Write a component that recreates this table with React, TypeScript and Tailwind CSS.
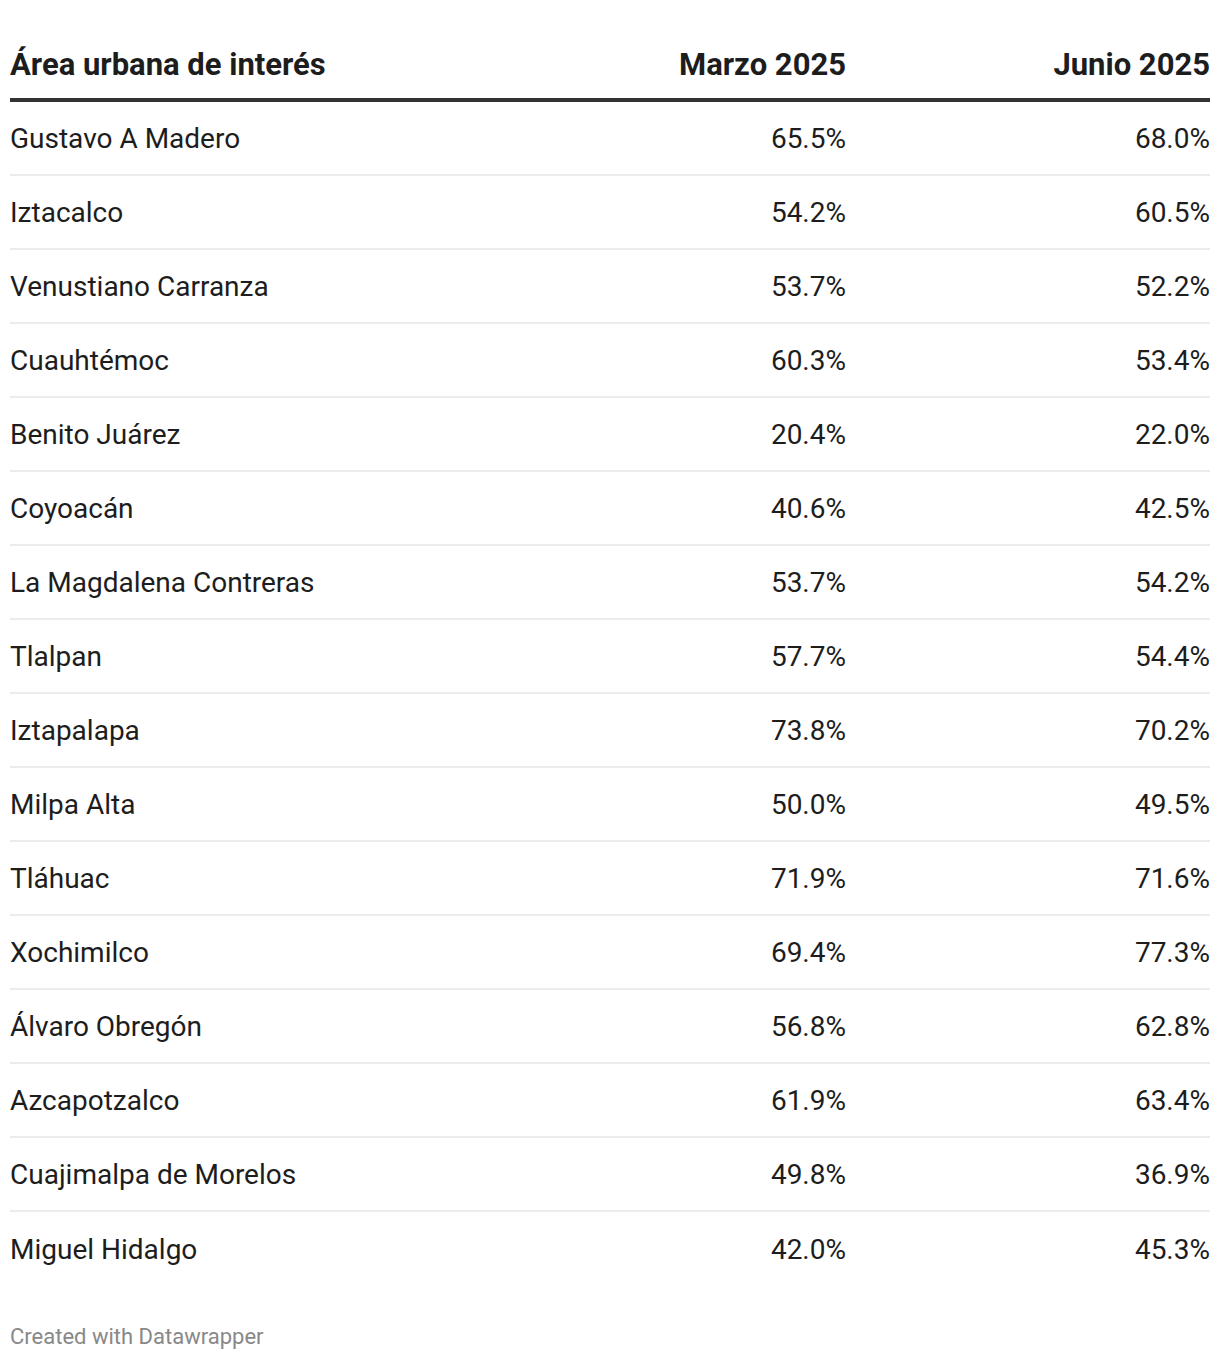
const rows: [string, string, string][] = [
  ['Gustavo A Madero', '65.5%', '68.0%'],
  ['Iztacalco', '54.2%', '60.5%'],
  ['Venustiano Carranza', '53.7%', '52.2%'],
  ['Cuauhtémoc', '60.3%', '53.4%'],
  ['Benito Juárez', '20.4%', '22.0%'],
  ['Coyoacán', '40.6%', '42.5%'],
  ['La Magdalena Contreras', '53.7%', '54.2%'],
  ['Tlalpan', '57.7%', '54.4%'],
  ['Iztapalapa', '73.8%', '70.2%'],
  ['Milpa Alta', '50.0%', '49.5%'],
  ['Tláhuac', '71.9%', '71.6%'],
  ['Xochimilco', '69.4%', '77.3%'],
  ['Álvaro Obregón', '56.8%', '62.8%'],
  ['Azcapotzalco', '61.9%', '63.4%'],
  ['Cuajimalpa de Morelos', '49.8%', '36.9%'],
  ['Miguel Hidalgo', '42.0%', '45.3%'],
];

export default function App() {
  return (
    <div className="bg-white min-h-[1360px] px-[10px] pt-[32px] text-[#1d1d1d] font-['Roboto',sans-serif]">
      {/* header */}
      <div className="grid grid-cols-[1fr_364px_364px] h-[70px] items-center border-b-4 border-[#333333] text-[31px] leading-none font-bold">
        <div className="pb-[2px]">Área urbana de interés</div>
        <div className="text-right pb-[2px]">Marzo 2025</div>
        <div className="text-right pb-[2px]">Junio 2025</div>
      </div>

      {rows.map(([name, m, j], i) => (
        <div
          key={name}
          className={
            'grid grid-cols-[1fr_364px_364px] h-[74px] items-center text-[28px] ' +
            (i < rows.length - 1 ? 'border-b-2 border-[#ececec]' : '')
          }
        >
          <div className="pt-[1px]">{name}</div>
          <div className="text-right pt-[1px]">{m}</div>
          <div className="text-right pt-[1px]">{j}</div>
        </div>
      ))}

      <div className="mt-[36px] text-[22px] leading-[30px] text-[#888888]">Created with Datawrapper</div>
    </div>
  );
}
